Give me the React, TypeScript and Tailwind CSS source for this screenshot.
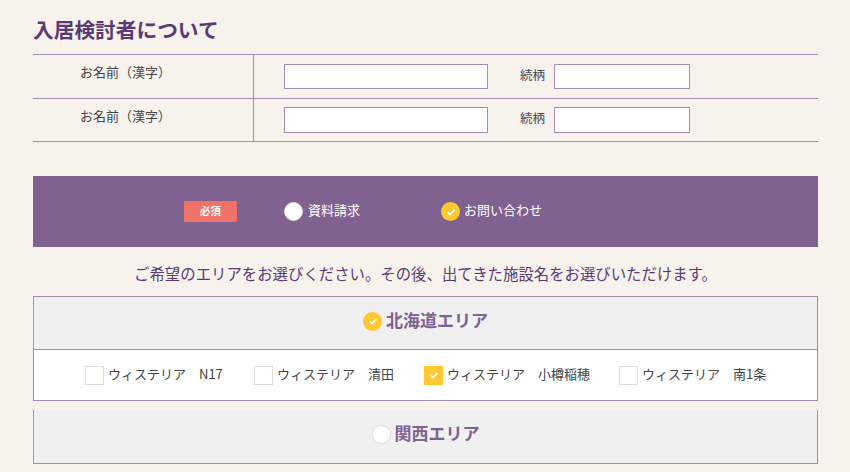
import React from "react";

const font = "font-['Meiryo','Noto_Sans_CJK_JP','Liberation_Sans',sans-serif]";

const facilities = [
  { name: "ウィステリア　N17", checked: false, width: "w-[169px]" },
  { name: "ウィステリア　清田", checked: false, width: "w-[170px]" },
  { name: "ウィステリア　小樽稲穂", checked: true, width: "w-[195px]" },
  { name: "ウィステリア　南1条", checked: false, width: "w-[150px]" },
];

const Tick = ({ size }: { size: number }) => (
  <svg width={size} height={size} viewBox="0 0 12 12" fill="none">
    <path d="M2.5 6.2 5 8.6 9.6 3.8" stroke="white" strokeWidth="1.7" />
  </svg>
);

const Radio = ({ checked }: { checked: boolean }) =>
  checked ? (
    <span className="flex h-[19px] w-[19px] items-center justify-center rounded-full bg-[#fdc830]">
      <Tick size={12} />
    </span>
  ) : (
    <span className="h-[19px] w-[19px] rounded-full border border-[#dddddd] bg-white" />
  );

const NameRow = ({ height, inputHeight, top }: { height: string; inputHeight: string; top: string }) => (
  <div className={`flex border-b border-[#a58cb6] ${height}`}>
    <div className="w-[221px] border-r border-[#a58cb6] pl-[47px] pt-[7px] text-[13px] leading-5 text-[#444444]">
      お名前（漢字）
    </div>
    <div className={`flex items-start pl-[30px] ${top}`}>
      <input className={`w-[204px] border border-[#a58cb6] bg-white ${inputHeight}`} />
      <span className="ml-[32px] mr-[9px] mt-[1px] text-[12.5px] leading-5 text-[#444444]">続柄</span>
      <input className={`w-[136px] border border-[#a58cb6] bg-white ${inputHeight}`} />
    </div>
  </div>
);

export default function App() {
  return (
    <div className={`h-[472px] w-[850px] overflow-hidden bg-[#f7f2ec] pl-[33px] pr-[32px] pt-[15px] ${font}`}>
      <h2 className="h-[39px] text-[20.7px] font-bold leading-[28px] text-[#5a3a76]">入居検討者について</h2>

      <div className="border-t border-[#a58cb6]">
        <NameRow height="h-[44px]" inputHeight="h-[25px]" top="pt-[9px]" />
        <NameRow height="h-[43px]" inputHeight="h-[26px]" top="pt-[8px]" />
      </div>

      <div className="mt-[34px] flex h-[71px] items-center bg-[#7f6290] pl-[151px] text-white">
        <span className="flex h-[21px] w-[53px] items-center justify-center rounded-[1px] bg-[#f0736a] pb-[1px] text-[10.5px] font-bold">
          必須
        </span>
        <label className="ml-[47px] flex items-center gap-[5px] text-[13px]">
          <Radio checked={false} />
          <span className="mb-[3px]">資料請求</span>
        </label>
        <label className="ml-[81px] flex items-center gap-[4px] text-[13px]">
          <Radio checked={true} />
          <span className="mb-[3px]">お問い合わせ</span>
        </label>
      </div>

      <p className="flex h-[49px] items-center justify-center pt-[4px] text-[15.4px] text-[#5a3a76]">
        ご希望のエリアをお選びください。その後、出てきた施設名をお選びいただけます。
      </p>

      <div className="border border-[#a58cb6]">
        <div className="flex h-[52px] items-center justify-center gap-[4px] bg-[#f0f0f0] pb-[4px] text-[17px] font-bold text-[#7f6290]">
          <Radio checked={true} />
          <span className="mb-[3px]">北海道エリア</span>
        </div>
        <div className="flex h-[51px] items-center border-t border-[#a58cb6] bg-white pl-[51px] text-[13px] text-[#444444]">
          {facilities.map((item) => (
            <label key={item.name} className={`flex items-center gap-[4px] ${item.width}`}>
              {item.checked ? (
                <span className="flex h-[19px] w-[19px] items-center justify-center bg-[#fdc830]">
                  <Tick size={12} />
                </span>
              ) : (
                <span className="h-[19px] w-[19px] border border-[#e0ded8] bg-white" />
              )}
              <span className="mb-[3px]">{item.name}</span>
            </label>
          ))}
        </div>
      </div>

      <div className="mt-[9px] flex h-[54px] items-center justify-center gap-[4px] border-x border-b border-[#a58cb6] bg-[#f0f0f0] pb-[5px] text-[17px] font-bold text-[#7f6290]">
        <Radio checked={false} />
        <span className="mb-[3px]">関西エリア</span>
      </div>
    </div>
  );
}
